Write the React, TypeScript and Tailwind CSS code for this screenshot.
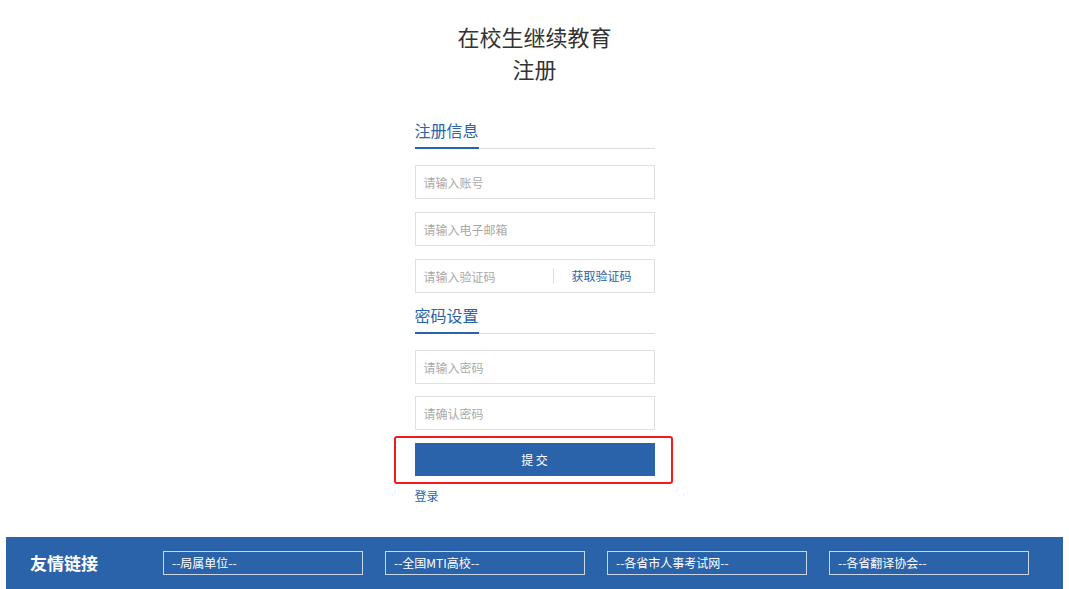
import React from "react";

const font = { fontFamily: '"Noto Sans CJK SC", "Liberation Sans", sans-serif' };

function SectionTitle({ title }: { title: string }) {
    return (
        <div className="border-b border-[#dcdcdc]">
            <div className="-mb-px w-16 border-b-2 border-[#2a63a9] pb-[5px] text-[16px] leading-6 text-[#2a63a9]">
                {title}
            </div>
        </div>
    );
}

function Field({ placeholder, type = "text" }: { placeholder: string; type?: string }) {
    return (
        <input
            type={type}
            placeholder={placeholder}
            className="block h-[34px] w-full border border-[#e0e0e0] bg-white px-2 text-[12px] text-[#333] outline-none placeholder:text-[#aaa]"
        />
    );
}

const links = ["--局属单位--", "--全国MTI高校--", "--各省市人事考试网--", "--各省翻译协会--"];

export default function App() {
    return (
        <div className="flex min-h-[589px] flex-col bg-white" style={font}>
            <div className="pt-5 text-center text-[22px] leading-8 text-[#333]">
                <div>在校生继续教育</div>
                <div>注册</div>
            </div>

            <div className="mx-auto mt-[34px] w-[240px]">
                <SectionTitle title="注册信息" />
                <div className="mt-4 flex flex-col gap-[13px]">
                    <Field placeholder="请输入账号" />
                    <Field placeholder="请输入电子邮箱" />
                    <div className="flex h-[34px] items-center border border-[#e0e0e0]">
                        <input
                            placeholder="请输入验证码"
                            className="h-full w-[137px] px-2 text-[12px] outline-none placeholder:text-[#aaa]"
                        />
                        <div className="h-4 w-px bg-[#dcdcdc]" />
                        <button className="flex-1 pr-1 text-center text-[12px] text-[#2a63a9]">获取验证码</button>
                    </div>
                </div>

                <div className="mt-[10px]">
                    <SectionTitle title="密码设置" />
                </div>
                <div className="mt-4 flex flex-col gap-3">
                    <Field placeholder="请输入密码" type="password" />
                    <Field placeholder="请确认密码" type="password" />
                </div>

                <div className="relative mt-[13px]">
                    <button className="block h-[33px] w-full bg-[#2a63a9] text-[12px] text-white">
                        提 交
                    </button>
                    <div className="pointer-events-none absolute -top-[7px] -bottom-[8px] -left-[21px] -right-[18px] rounded-[3px] border-2 border-[#f5191b]" />
                </div>

                <div className="mt-[11px] text-[12px] leading-[18px] text-[#2a63a9]">登录</div>
            </div>

            <div className="mx-[6px] mt-auto flex h-[52px] items-center bg-[#2a63a9] pl-6">
                <div className="w-[133px] text-[17px] font-bold text-white">友情链接</div>
                <div className="flex gap-[22px]">
                    {links.map((l) => (
                        <div
                            key={l}
                            className="flex h-6 w-[200px] items-center border border-[#c9d6e8] px-2 text-[12px] text-white"
                        >
                            {l}
                        </div>
                    ))}
                </div>
            </div>
        </div>
    );
}
